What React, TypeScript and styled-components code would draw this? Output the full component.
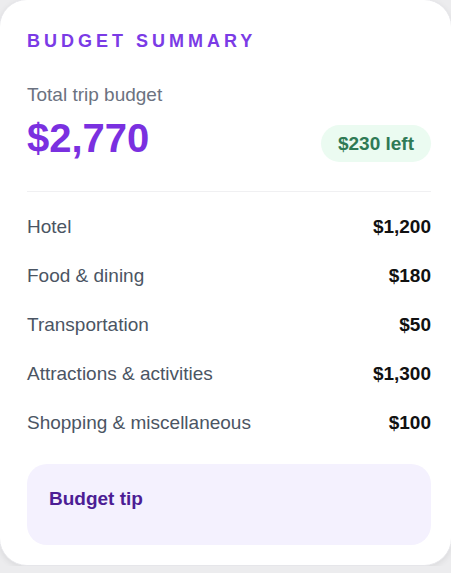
import React from "react";
import styled, { createGlobalStyle } from "styled-components";

const GlobalStyle = createGlobalStyle`
  html, body {
    margin: 0;
    padding: 0;
    background: #ececee;
  }
  body {
    font-family: "Liberation Sans", Arial, sans-serif;
  }
`;

interface Item {
  label: string;
  amount: string;
}

const items: Item[] = [
  { label: "Hotel", amount: "$1,200" },
  { label: "Food & dining", amount: "$180" },
  { label: "Transportation", amount: "$50" },
  { label: "Attractions & activities", amount: "$1,300" },
  { label: "Shopping & miscellaneous", amount: "$100" },
];

const App: React.FC = () => (
  <>
    <GlobalStyle />
    <Card>
      <Title>Budget Summary</Title>

      <TotalLabel>Total trip budget</TotalLabel>
      <TotalRow>
        <Total>$2,770</Total>
        <LeftPill>$230 left</LeftPill>
      </TotalRow>

      <List>
        {items.map((item) => (
          <Row key={item.label}>
            <Label>{item.label}</Label>
            <Amount>{item.amount}</Amount>
          </Row>
        ))}
      </List>

      <TipBox>
        <TipTitle>Budget tip</TipTitle>
      </TipBox>
    </Card>
  </>
);

const Card = styled.div`
  box-sizing: border-box;
  width: 453px;
  height: 567px;
  margin: -1px 0 0 -1px;
  padding: 30px 20px 0 27px;
  background: #ffffff;
  border: 1px solid #e6e6ea;
  border-radius: 28px;
  box-shadow: 0 2px 6px rgba(0, 0, 0, 0.08);
  display: flex;
  flex-direction: column;
`;

const Title = styled.h2`
  margin: 0;
  font-size: 18px;
  line-height: 22px;
  font-weight: 700;
  letter-spacing: 4px;
  text-transform: uppercase;
  color: #7b3be6;
`;

const TotalLabel = styled.div`
  margin-top: 32px;
  font-size: 19px;
  line-height: 22px;
  color: #6b7280;
`;

const TotalRow = styled.div`
  margin-top: 9px;
  display: flex;
  align-items: flex-start;
  justify-content: space-between;
  padding-bottom: 29px;
  border-bottom: 1px solid #f0f0f2;
`;

const Total = styled.div`
  font-size: 40px;
  line-height: 46px;
  font-weight: 700;
  color: #7a30e0;
`;

const LeftPill = styled.div`
  margin-top: 10px;
  padding: 0 17px;
  height: 37px;
  line-height: 37px;
  border-radius: 19px;
  background: #ebfbf1;
  color: #2f7a55;
  font-size: 19px;
  font-weight: 700;
`;

const List = styled.div`
  display: flex;
  flex-direction: column;
  gap: 27px;
  padding-top: 24px;
`;

const Row = styled.div`
  display: flex;
  justify-content: space-between;
  align-items: center;
  font-size: 19px;
  line-height: 22px;
`;

const Label = styled.span`
  color: #4b5563;
`;

const Amount = styled.span`
  font-weight: 700;
  color: #111111;
`;

const TipBox = styled.div`
  margin-top: 30px;
  height: 81px;
  border-radius: 20px;
  background: #f4f1fe;
  padding: 24px 22px 0;
  box-sizing: border-box;
`;

const TipTitle = styled.div`
  font-size: 19px;
  line-height: 22px;
  font-weight: 700;
  color: #4c1d95;
`;

export default App;
